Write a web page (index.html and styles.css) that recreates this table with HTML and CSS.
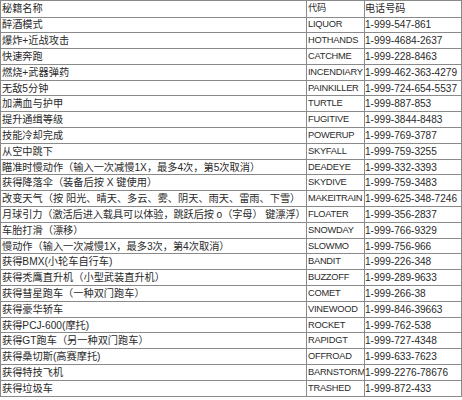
FILE: index.html
```html
<!DOCTYPE html>
<html lang="zh-CN">
<head>
<meta charset="utf-8">
<title>秘籍</title>
<link rel="stylesheet" href="styles.css">
</head>
<body>
<table class="cheats">
<colgroup><col class="c-name"><col class="c-code"><col class="c-phone"></colgroup>
<tbody>
<tr class="head"><td>秘籍名称</td><td>代码</td><td>电话号码</td></tr>
<tr><td>醉酒模式</td><td>LIQUOR</td><td>1-999-547-861</td></tr>
<tr><td>爆炸+近战攻击</td><td>HOTHANDS</td><td>1-999-4684-2637</td></tr>
<tr><td>快速奔跑</td><td>CATCHME</td><td>1-999-228-8463</td></tr>
<tr><td>燃烧+武器弹药</td><td>INCENDIARY</td><td>1-999-462-363-4279</td></tr>
<tr><td>无敌5分钟</td><td>PAINKILLER</td><td>1-999-724-654-5537</td></tr>
<tr><td>加满血与护甲</td><td>TURTLE</td><td>1-999-887-853</td></tr>
<tr><td>提升通缉等级</td><td>FUGITIVE</td><td>1-999-3844-8483</td></tr>
<tr><td>技能冷却完成</td><td>POWERUP</td><td>1-999-769-3787</td></tr>
<tr><td>从空中跳下</td><td>SKYFALL</td><td>1-999-759-3255</td></tr>
<tr><td>瞄准时慢动作（输入一次减慢1X，最多4次，第5次取消）</td><td>DEADEYE</td><td>1-999-332-3393</td></tr>
<tr><td>获得降落伞（装备后按 X 键使用）</td><td>SKYDIVE</td><td>1-999-759-3483</td></tr>
<tr><td>改变天气（按 阳光、晴天、多云、雾、阴天、雨天、雷雨、下雪）</td><td>MAKEITRAIN</td><td>1-999-625-348-7246</td></tr>
<tr><td class="tight">月球引力（激活后进入载具可以体验，跳跃后按 o（字母） 键漂浮）</td><td>FLOATER</td><td>1-999-356-2837</td></tr>
<tr><td>车胎打滑（漂移）</td><td>SNOWDAY</td><td>1-999-766-9329</td></tr>
<tr><td>慢动作（输入一次减慢1X，最多3次，第4次取消）</td><td>SLOWMO</td><td>1-999-756-966</td></tr>
<tr><td>获得BMX(小轮车自行车)</td><td>BANDIT</td><td>1-999-226-348</td></tr>
<tr><td>获得秃鹰直升机（小型武装直升机）</td><td>BUZZOFF</td><td>1-999-289-9633</td></tr>
<tr><td>获得彗星跑车（一种双门跑车）</td><td>COMET</td><td>1-999-266-38</td></tr>
<tr><td>获得豪华轿车</td><td>VINEWOOD</td><td>1-999-846-39663</td></tr>
<tr><td>获得PCJ-600(摩托)</td><td>ROCKET</td><td>1-999-762-538</td></tr>
<tr><td>获得GT跑车（另一种双门跑车）</td><td>RAPIDGT</td><td>1-999-727-4348</td></tr>
<tr><td>获得桑切斯(高赛摩托)</td><td>OFFROAD</td><td>1-999-633-7623</td></tr>
<tr><td>获得特技飞机</td><td>BARNSTORM</td><td>1-999-2276-78676</td></tr>
<tr><td>获得垃圾车</td><td>TRASHED</td><td>1-999-872-433</td></tr>
</tbody>
</table>
</body>
</html>
```
FILE: styles.css
```css
html, body {
  margin: 0;
  padding: 0;
  background: #ffffff;
}

.cheats {
  border-collapse: collapse;
  table-layout: fixed;
  width: 461px;
  border: 1px solid #555;
  font-family: "Liberation Sans", "Noto Sans CJK SC", sans-serif;
  font-size: 10.2px;
  color: #2a2a2a;
}

.c-name { width: 306px; }
.c-code { width: 58px; }
.c-phone { width: 97px; }

.cheats tr {
  height: 15.8px;
}

.cheats tr.head {
  height: 16.5px;
}

.cheats td {
  border: 1px solid #8a8a8a;
  padding: 0 0 0 1px;
  white-space: nowrap;
  overflow: hidden;
  line-height: 13px;
  vertical-align: middle;
}

.cheats td.tight {
  letter-spacing: -0.1px;
}

.cheats td:nth-child(2) {
  font-size: 9.3px;
  letter-spacing: -0.25px;
}

.cheats td:nth-child(3) {
  font-size: 10.1px;
  padding-left: 0;
}
```
